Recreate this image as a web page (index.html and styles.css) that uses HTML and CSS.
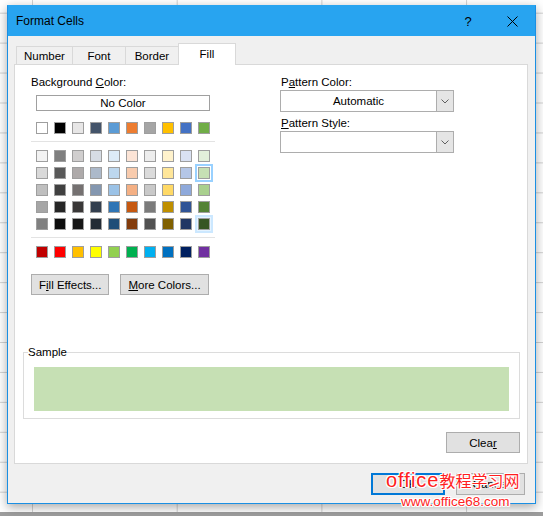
FILE: index.html
```html
<!DOCTYPE html>
<html lang="en">
<head>
    <meta charset="UTF-8">
    <title>Format Cells</title>
    <link rel="stylesheet" href="styles.css">
</head>
<body>
    <div class="dialog">
        <div class="titlebar">
            <span class="title">Format Cells</span>
            <span class="help">?</span>
            <span class="close">
                <svg width="11" height="11" viewBox="0 0 11 11"><path d="M0.5 0.5L10.5 10.5M10.5 0.5L0.5 10.5" stroke="#000" stroke-width="1" fill="none"/></svg>
            </span>
        </div>

        <div class="dialog-body">
            <div class="tabs">
                <div class="tab">Number</div>
                <div class="tab">Font</div>
                <div class="tab">Border</div>
                <div class="tab active">Fill</div>
            </div>

            <div class="panel">
                <div class="fill-top">
                    <!-- 背景色 -->
                    <div class="bg-col">
                        <div class="label">Background <u>C</u>olor:</div>
                        <div class="no-color">No Color</div>

                        <div class="swatches theme-row">
                            <span class="swatch" style="background:#ffffff"></span>
                            <span class="swatch" style="background:#000000"></span>
                            <span class="swatch" style="background:#e7e6e6"></span>
                            <span class="swatch" style="background:#44546a"></span>
                            <span class="swatch" style="background:#5b9bd5"></span>
                            <span class="swatch" style="background:#ed7d31"></span>
                            <span class="swatch" style="background:#a5a5a5"></span>
                            <span class="swatch" style="background:#ffc000"></span>
                            <span class="swatch" style="background:#4472c4"></span>
                            <span class="swatch" style="background:#70ad47"></span>
                        </div>

                        <div class="sep"></div>

                        <div class="swatches tints">
                            <span class="swatch" style="background:#f2f2f2"></span>
                            <span class="swatch" style="background:#7f7f7f"></span>
                            <span class="swatch" style="background:#d0cece"></span>
                            <span class="swatch" style="background:#d6dce4"></span>
                            <span class="swatch" style="background:#ddebf7"></span>
                            <span class="swatch" style="background:#fce4d6"></span>
                            <span class="swatch" style="background:#ededed"></span>
                            <span class="swatch" style="background:#fff2cc"></span>
                            <span class="swatch" style="background:#d9e1f2"></span>
                            <span class="swatch" style="background:#e2efda"></span>

                            <span class="swatch" style="background:#d9d9d9"></span>
                            <span class="swatch" style="background:#595959"></span>
                            <span class="swatch" style="background:#aeaaaa"></span>
                            <span class="swatch" style="background:#acb9ca"></span>
                            <span class="swatch" style="background:#bdd7ee"></span>
                            <span class="swatch" style="background:#f8cbad"></span>
                            <span class="swatch" style="background:#dbdbdb"></span>
                            <span class="swatch" style="background:#ffe699"></span>
                            <span class="swatch" style="background:#b4c6e7"></span>
                            <span class="swatch selected" style="background:#c6e0b4"></span>

                            <span class="swatch" style="background:#bfbfbf"></span>
                            <span class="swatch" style="background:#404040"></span>
                            <span class="swatch" style="background:#757171"></span>
                            <span class="swatch" style="background:#8497b0"></span>
                            <span class="swatch" style="background:#9bc2e6"></span>
                            <span class="swatch" style="background:#f4b084"></span>
                            <span class="swatch" style="background:#c9c9c9"></span>
                            <span class="swatch" style="background:#ffd966"></span>
                            <span class="swatch" style="background:#8ea9db"></span>
                            <span class="swatch" style="background:#a9d08e"></span>

                            <span class="swatch" style="background:#a6a6a6"></span>
                            <span class="swatch" style="background:#262626"></span>
                            <span class="swatch" style="background:#3a3838"></span>
                            <span class="swatch" style="background:#333f4f"></span>
                            <span class="swatch" style="background:#2f75b5"></span>
                            <span class="swatch" style="background:#c65911"></span>
                            <span class="swatch" style="background:#7b7b7b"></span>
                            <span class="swatch" style="background:#bf8f00"></span>
                            <span class="swatch" style="background:#305496"></span>
                            <span class="swatch" style="background:#548235"></span>

                            <span class="swatch" style="background:#808080"></span>
                            <span class="swatch" style="background:#0d0d0d"></span>
                            <span class="swatch" style="background:#161616"></span>
                            <span class="swatch" style="background:#222b35"></span>
                            <span class="swatch" style="background:#1f4e78"></span>
                            <span class="swatch" style="background:#833c0c"></span>
                            <span class="swatch" style="background:#525252"></span>
                            <span class="swatch" style="background:#806000"></span>
                            <span class="swatch" style="background:#203764"></span>
                            <span class="swatch hover" style="background:#375623"></span>
                        </div>

                        <div class="sep"></div>

                        <div class="swatches standard">
                            <span class="swatch" style="background:#c00000"></span>
                            <span class="swatch" style="background:#ff0000"></span>
                            <span class="swatch" style="background:#ffc000"></span>
                            <span class="swatch" style="background:#ffff00"></span>
                            <span class="swatch" style="background:#92d050"></span>
                            <span class="swatch" style="background:#00b050"></span>
                            <span class="swatch" style="background:#00b0f0"></span>
                            <span class="swatch" style="background:#0070c0"></span>
                            <span class="swatch" style="background:#002060"></span>
                            <span class="swatch" style="background:#7030a0"></span>
                        </div>

                        <div class="btn-row">
                            <button type="button" class="btn">F<u>i</u>ll Effects...</button>
                            <button type="button" class="btn"><u>M</u>ore Colors...</button>
                        </div>
                    </div>

                    <!-- 图案 -->
                    <div class="pattern-col">
                        <div class="label">P<u>a</u>ttern Color:</div>
                        <div class="combo">
                            <span class="combo-text">Automatic</span>
                            <span class="combo-arrow">
                                <svg width="8" height="5" viewBox="0 0 8 5"><path d="M0.5 0.5L4 4L7.5 0.5" stroke="#606060" fill="none"/></svg>
                            </span>
                        </div>
                        <div class="label style-label"><u>P</u>attern Style:</div>
                        <div class="combo">
                            <span class="combo-text"></span>
                            <span class="combo-arrow">
                                <svg width="8" height="5" viewBox="0 0 8 5"><path d="M0.5 0.5L4 4L7.5 0.5" stroke="#606060" fill="none"/></svg>
                            </span>
                        </div>
                    </div>
                </div>

                <fieldset class="sample">
                    <legend>Sample</legend>
                    <div class="sample-fill"></div>
                </fieldset>

                <div class="clear-row">
                    <button type="button" class="btn btn-clear">Clea<u>r</u></button>
                </div>
            </div>

            <div class="footer">
                <button type="button" class="btn btn-ok">OK</button>
                <button type="button" class="btn btn-cancel">Cancel</button>
            </div>
        </div>
    </div>

    <div class="watermark">
        <div class="wm-main"><span class="wm-latin">office</span>教程学习网</div>
        <div class="wm-url">www.office68.com</div>
    </div>
</body>
</html>
```

FILE: styles.css
```css
* {
    margin: 0;
    padding: 0;
    box-sizing: border-box;
}

body {
    position: relative;
    height: 516px;
    overflow: hidden;
    padding: 5px 0 0 7px;
    font-family: "Liberation Sans", Arial, sans-serif;
    font-size: 11.5px;
    color: #000;
    background-color: #fff;
    background-image: linear-gradient(to top, #9d9d9d 4px, transparent 4px),
                      linear-gradient(to right, #d2d2d2 1px, transparent 1px),
                      linear-gradient(to bottom, #d2d2d2 1px, transparent 1px);
    background-size: 100% 100%, 144.7px 100%, 100% 29.95px;
    background-position: 0 0, 32px 0, 0 12.7px;
}

/* 对话框 */
.dialog {
    width: 529px;
    border: 1px solid #1a8fe3;
    border-top-color: #28a4f0;
    background: #f0f0f0;
    box-shadow: 0 3px 10px rgba(0, 0, 0, 0.35);
}

.titlebar {
    height: 30px;
    background: #28a4f0;
    display: flex;
    align-items: center;
    padding-left: 8px;
}

.title {
    font-size: 12px;
}

.help {
    margin-left: auto;
    margin-right: 6px;
    width: 30px;
    text-align: center;
    font-size: 13px;
}

.close {
    width: 46px;
    display: flex;
    justify-content: center;
}

.dialog-body {
    padding: 7px 7px 8px 6px;
}

/* 选项卡 */
.tabs {
    display: flex;
    align-items: flex-end;
    height: 21px;
    margin-left: 2px;
}

.tab {
    height: 18px;
    min-width: 54px;
    padding: 0 7px;
    border: 1px solid #d9d9d9;
    border-bottom: none;
    margin-right: -1px;
    display: flex;
    align-items: center;
    justify-content: center;
    background: #f0f0f0;
}

.tab.active {
    height: 22px;
    min-width: 58px;
    margin-bottom: -1px;
    padding-bottom: 2px;
    background: #fff;
    position: relative;
    z-index: 1;
}

.panel {
    background: #fff;
    border: 1px solid #d9d9d9;
    padding: 0 7px 10px 8px;
}

.fill-top {
    display: flex;
    padding-top: 10px;
}

.label {
    height: 14px;
    line-height: 14px;
}

.bg-col {
    width: 184px;
    margin-left: 8px;
}

.no-color {
    width: 174px;
    height: 16px;
    margin: 6px 0 0 5px;
    border: 1px solid #a0a0a0;
    text-align: center;
    line-height: 14px;
}

.swatches {
    display: grid;
    grid-template-columns: repeat(10, 12px);
    column-gap: 6px;
    row-gap: 5px;
    margin-left: 5px;
}

.swatch {
    width: 12px;
    height: 12px;
    border: 1px solid #9e9e9e;
}

.swatch.selected {
    box-shadow: 0 0 0 1px #fff, 0 0 0 3px #99d1ff;
}

.swatch.hover {
    box-shadow: 0 0 0 1px #e5f3ff, 0 0 0 3px #cce8ff;
}

.theme-row {
    margin-top: 11px;
}

.sep {
    height: 1px;
    background: #e3e3e3;
    margin-top: 7px;
}

.tints,
.standard {
    margin-top: 8px;
}

.btn-row {
    display: flex;
    gap: 11px;
    margin-top: 16px;
}

.btn {
    height: 21px;
    padding: 0 7px;
    border: 1px solid #adadad;
    background: #e1e1e1;
    font: inherit;
    color: #000;
}

.pattern-col {
    width: 174px;
    margin-left: 65px;
}

.pattern-col .label {
    padding-left: 1px;
}

.pattern-col .style-label {
    margin-top: 4px;
}

.combo {
    display: flex;
    height: 22px;
    margin-top: 1px;
    border: 1px solid #adadad;
    background: #fff;
}

.combo-text {
    flex: 1;
    text-align: center;
    line-height: 20px;
}

.combo-arrow {
    width: 17px;
    border-left: 1px solid #adadad;
    background: #e5e5e5;
    display: flex;
    align-items: center;
    justify-content: center;
}

/* 示例 */
.sample {
    margin-top: 50px;
    border: 1px solid #dcdcdc;
    padding: 8px 10px 7px 10px;
}

.sample legend {
    margin-left: -6px;
    padding: 0;
    line-height: 14px;
}

.sample-fill {
    height: 44px;
    background: #c6e0b4;
}

.clear-row {
    display: flex;
    justify-content: flex-end;
    margin-top: 13px;
}

.btn-clear {
    width: 74px;
}

.footer {
    display: flex;
    justify-content: flex-end;
    gap: 11px;
    margin-top: 9px;
    padding-right: 3px;
}

.footer .btn {
    height: 22px;
}

.btn-ok {
    width: 74px;
    border: 2px solid #0078d7;
}

.btn-cancel {
    width: 69px;
}

/* 水印 */
.watermark {
    position: absolute;
    left: 386px;
    top: 469px;
    color: #ff1e1e;
    font-family: "Liberation Sans", "Noto Sans CJK SC", sans-serif;
    text-shadow: 1px 0 #fff, -1px 0 #fff, 0 1px #fff, 0 -1px #fff,
                 1px 1px #fff, -1px -1px #fff, 1px -1px #fff, -1px 1px #fff;
}

.wm-main {
    font-size: 16px;
    line-height: 22px;
    white-space: nowrap;
}

.wm-latin {
    font-size: 20px;
    letter-spacing: 1px;
}

.wm-url {
    font-size: 13.5px;
    line-height: 14px;
    margin: 2px 0 0 15px;
}
```
